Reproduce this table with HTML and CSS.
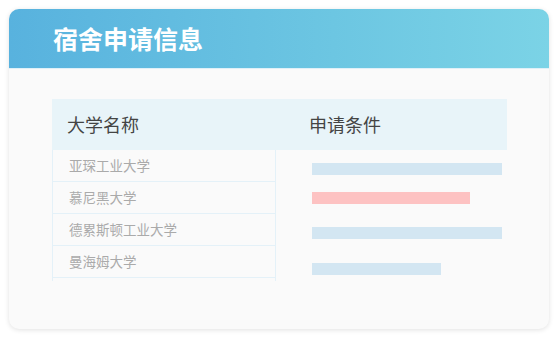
FILE: index.html
```html
<!DOCTYPE html>
<html>
  <head>
    <meta charset="utf-8">
    <title>宿舍申请信息</title>
    <link rel="stylesheet" href="styles.css">
  </head>
  <body>

    <section class="card">
      <header class="card-head">
        <h1>宿舍申请信息</h1>
      </header>

      <div class="card-body">
        <div class="table">
          <div class="th th-name">大学名称</div>
          <div class="th th-cond">申请条件</div>

          <ul class="names">
            <li>亚琛工业大学</li>
            <li>慕尼黑大学</li>
            <li>德累斯顿工业大学</li>
            <li>曼海姆大学</li>
          </ul>

          <div class="conds">
            <span class="bar bar-1"></span>
            <span class="bar bar-2 warn"></span>
            <span class="bar bar-3"></span>
            <span class="bar bar-4"></span>
          </div>
        </div>
      </div>
    </section>

  </body>
</html>
```

FILE: styles.css
```css
/* General styles */

html {
  background-color: white;
  font-family: "Noto Sans CJK SC", "Noto Sans", sans-serif;
}

body {
  margin: 0;
  padding: 9px;
}

* {
  box-sizing: border-box;
}

/* Card */

.card {
  width: 540px;
  height: 320px;
  background-color: #fafafa;
  border-radius: 10px;
  box-shadow: 0 1px 5px rgba(0, 0, 0, 0.12);
  overflow: hidden;
}

.card-head {
  height: 60px;
  padding: 14px 0 0 44px;
  background: linear-gradient(90deg, #58b2de 0%, #6cc6e2 60%, #7bd3e6 100%);
  border-bottom: 1px solid #dff0f8;
}

.card-head h1 {
  margin: 0;
  font-size: 25px;
  line-height: 30px;
  font-weight: bold;
  color: white;
  letter-spacing: 0;
}

.card-body {
  padding: 30px 41px 0 43px;
}

/* Table */

.table {
  display: grid;
  grid-template-columns: 224px 231px;
}

.th {
  height: 51px;
  background-color: #e8f4f9;
  font-size: 18px;
  line-height: 51px;
  color: #444;
}

.th-name {
  padding-left: 15px;
}

.th-cond {
  padding-left: 33px;
}

.names {
  margin: 0;
  padding: 0 0 3px;
  list-style: none;
  border-left: 1px solid #e4f1f8;
  border-right: 1px solid #e4f1f8;
}

.names li {
  height: 32px;
  line-height: 31px;
  padding-left: 16px;
  font-size: 13.5px;
  color: #aaa;
  border-bottom: 1px solid #e4f1f8;
}

.conds {
  display: flex;
  flex-direction: column;
  align-items: flex-start;
  padding: 13px 0 0 36px;
}

.bar {
  display: block;
  height: 12px;
  background-color: #d3e6f2;
}

.bar.warn {
  background-color: #fdc2c2;
}

.bar-1 { width: 190px; }
.bar-2 { width: 158px; margin-top: 17px; }
.bar-3 { width: 190px; margin-top: 23px; }
.bar-4 { width: 129px; margin-top: 24px; }
```
